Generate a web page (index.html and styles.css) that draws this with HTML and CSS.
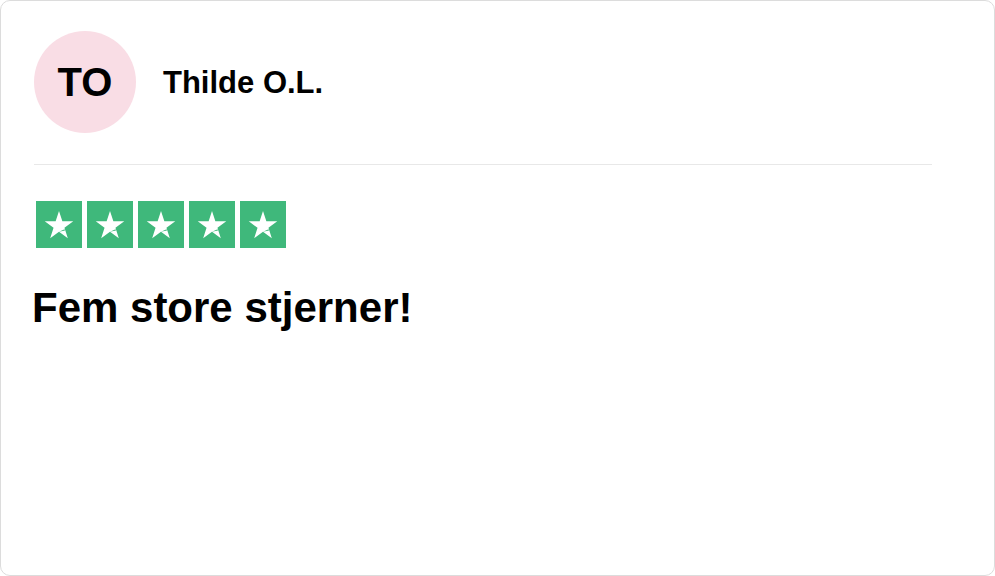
FILE: index.html
```html
<!DOCTYPE html>
<html lang="da">
<head>
    <meta charset="UTF-8">
    <meta name="viewport" content="width=device-width, initial-scale=1.0">
    <title>Anmeldelse</title>
    <link rel="stylesheet" href="styles.css">
</head>
<body>
    <div class="review-card">
        <!-- Reviewer header -->
        <div class="reviewer">
            <div class="avatar">TO</div>
            <div class="reviewer-name">Thilde O.L.</div>
        </div>

        <div class="review-body">
            <!-- 5 of 5 stars -->
            <div class="stars">
                <div class="star-box"><svg viewBox="0 0 46 46"><path class="star" d="M23 10L26.37 20.36H37.27L28.45 26.77L31.82 37.14L23 30.73L14.18 37.14L17.55 26.77L8.73 20.36H19.63Z"/><path class="notch" d="M23 30.73L28.6 28.3L29 29.4Z"/></svg></div>
                <div class="star-box"><svg viewBox="0 0 46 46"><path class="star" d="M23 10L26.37 20.36H37.27L28.45 26.77L31.82 37.14L23 30.73L14.18 37.14L17.55 26.77L8.73 20.36H19.63Z"/><path class="notch" d="M23 30.73L28.6 28.3L29 29.4Z"/></svg></div>
                <div class="star-box"><svg viewBox="0 0 46 46"><path class="star" d="M23 10L26.37 20.36H37.27L28.45 26.77L31.82 37.14L23 30.73L14.18 37.14L17.55 26.77L8.73 20.36H19.63Z"/><path class="notch" d="M23 30.73L28.6 28.3L29 29.4Z"/></svg></div>
                <div class="star-box"><svg viewBox="0 0 46 46"><path class="star" d="M23 10L26.37 20.36H37.27L28.45 26.77L31.82 37.14L23 30.73L14.18 37.14L17.55 26.77L8.73 20.36H19.63Z"/><path class="notch" d="M23 30.73L28.6 28.3L29 29.4Z"/></svg></div>
                <div class="star-box"><svg viewBox="0 0 46 46"><path class="star" d="M23 10L26.37 20.36H37.27L28.45 26.77L31.82 37.14L23 30.73L14.18 37.14L17.55 26.77L8.73 20.36H19.63Z"/><path class="notch" d="M23 30.73L28.6 28.3L29 29.4Z"/></svg></div>
            </div>
            <h1 class="review-title">Fem store stjerner!</h1>
        </div>
    </div>
</body>
</html>
```

FILE: styles.css
```css
* {
    margin: 0;
    padding: 0;
    box-sizing: border-box;
}

body, html {
    height: 100%;
    background-color: white;
    font-family: "Liberation Sans", Arial, sans-serif;
    color: black;
}

.review-card {
    width: 995px;
    height: 576px;
    border: 1px solid #dcdcdc;
    border-radius: 10px;
    background-color: white;
    padding: 30px 62px 0 33px;
}

.reviewer {
    display: flex;
    align-items: center;
    gap: 27px;
    padding-bottom: 31px;
    border-bottom: 1px solid #e8e8e8;
}

.avatar {
    width: 102px;
    height: 102px;
    border-radius: 50%;
    background-color: #f9dde5;
    display: flex;
    justify-content: center;
    align-items: center;
    font-size: 40px;
    font-weight: bold;
}

.reviewer-name {
    font-size: 31px;
    font-weight: bold;
    margin-top: 2px;
}

.review-body {
    padding-top: 36px;
}

.stars {
    display: flex;
    gap: 5px;
    padding-left: 2px;
}

.star-box {
    width: 46px;
    height: 47px;
    background-color: #3fb87b;
}

.star-box svg {
    display: block;
    width: 46px;
    height: 46px;
}

.star-box .star {
    fill: white;
}

.star-box .notch {
    fill: #3fb87b;
}

.review-title {
    margin-top: 36px;
    margin-left: -2px;
    font-size: 42px;
    font-weight: bold;
}
```
